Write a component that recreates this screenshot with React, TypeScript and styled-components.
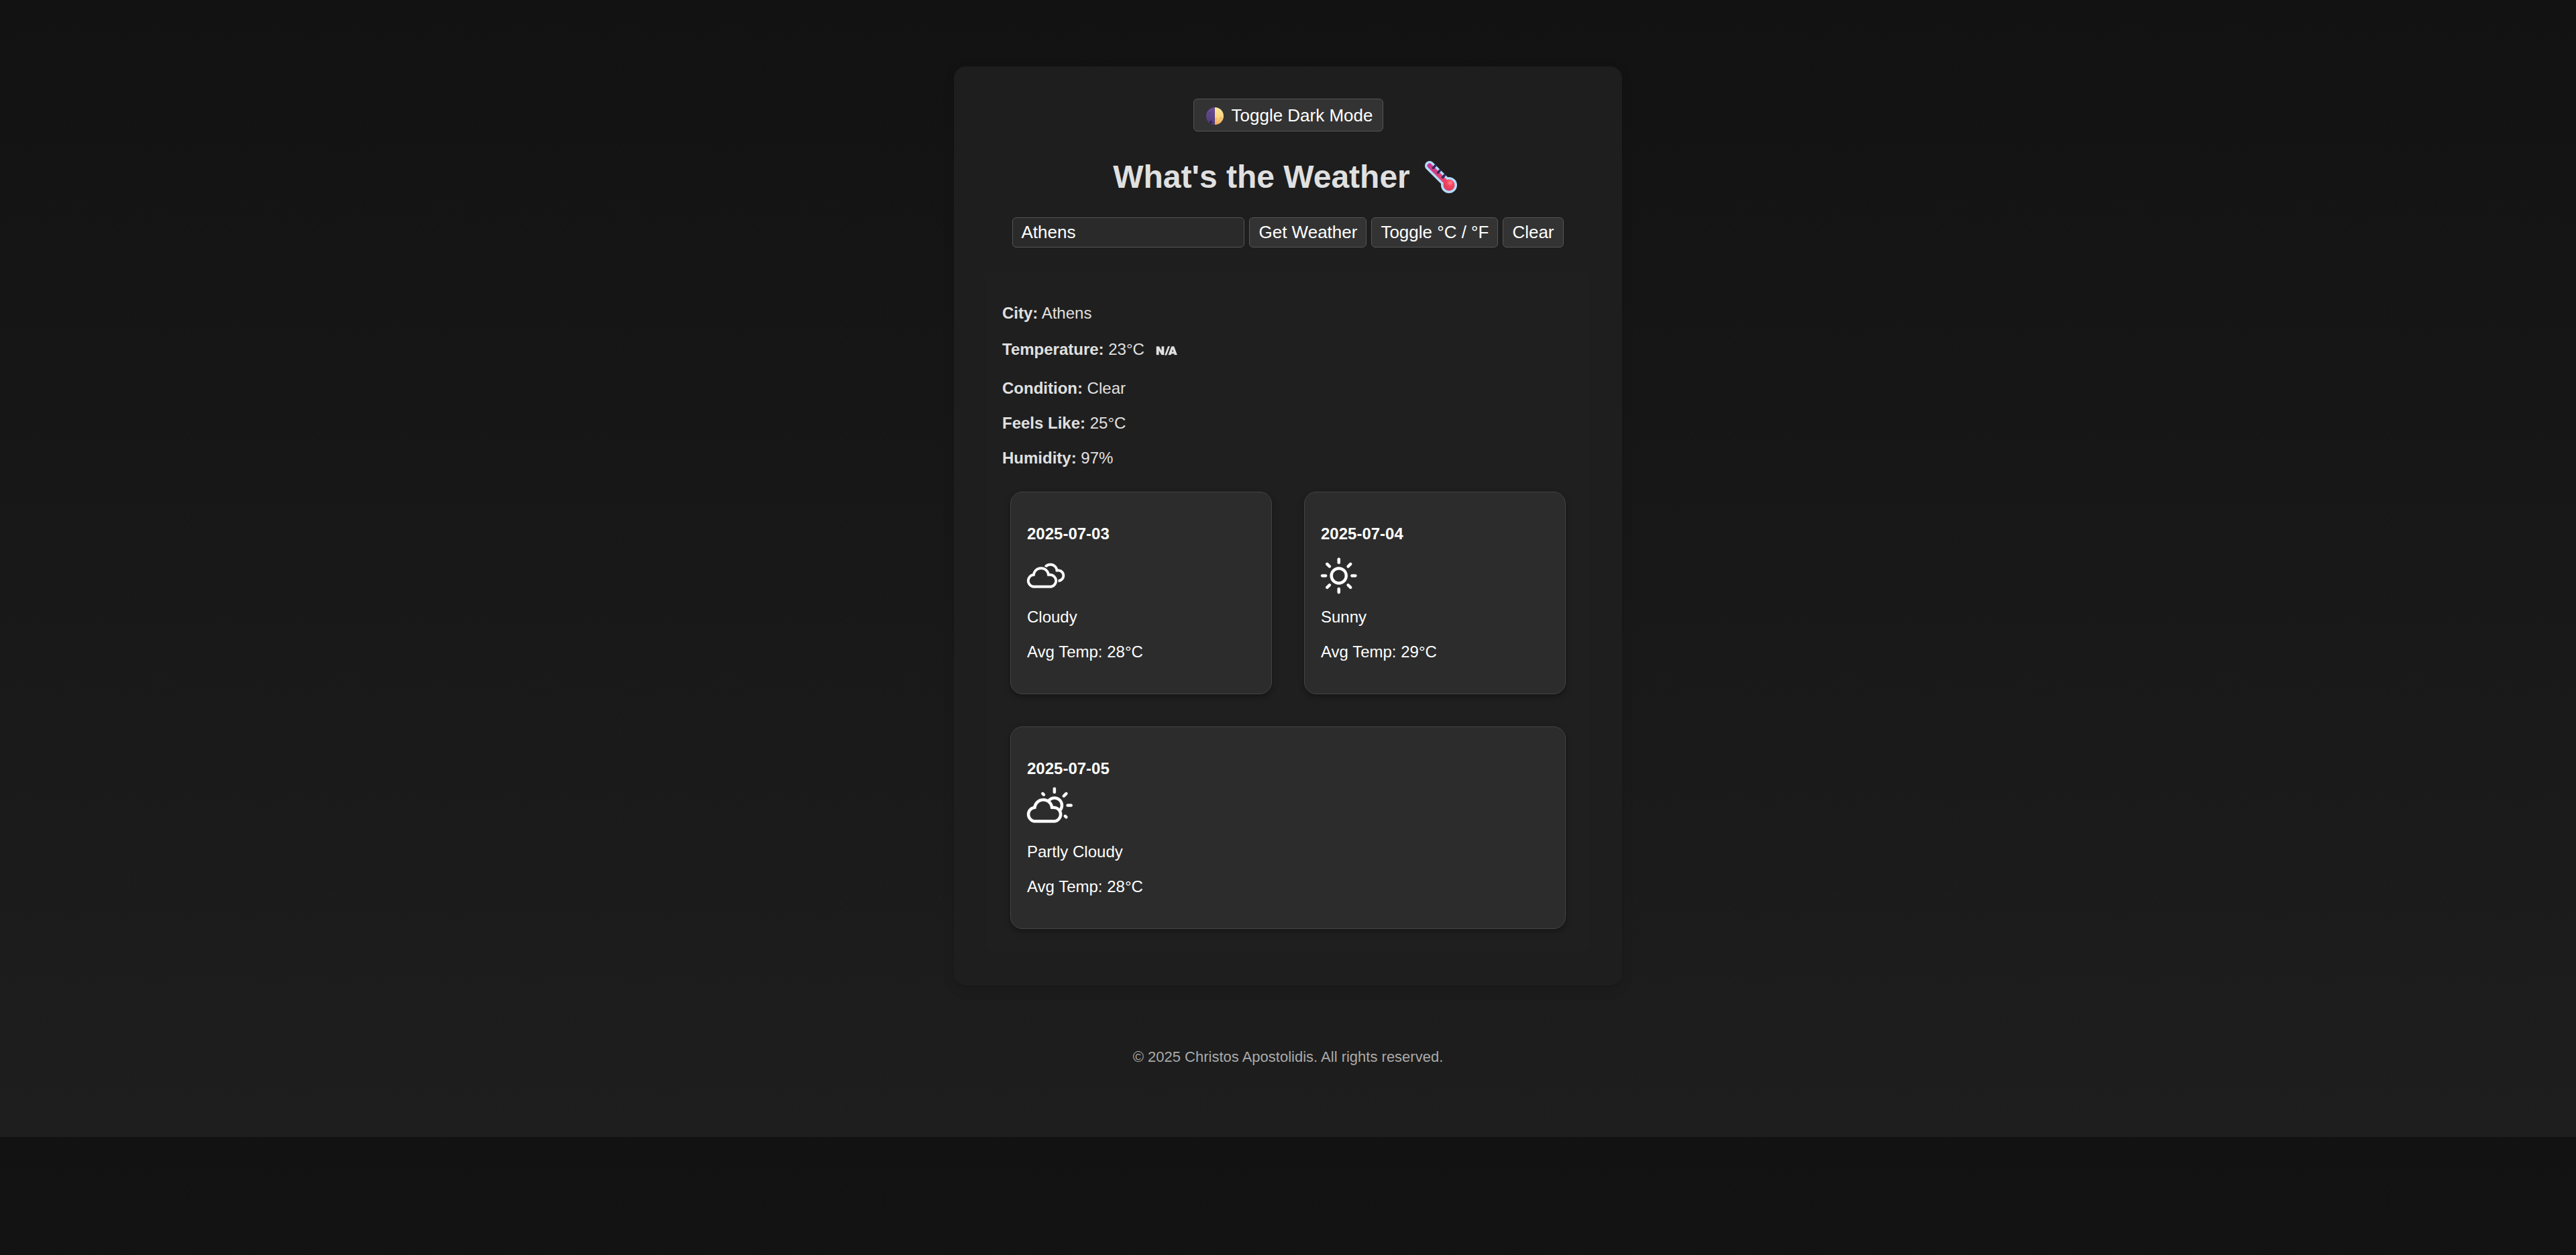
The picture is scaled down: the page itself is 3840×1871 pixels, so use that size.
import React, { useState } from "react";
import styled, { createGlobalStyle } from "styled-components";
import { WiCloudy, WiDayCloudy, WiDaySunny, WiNa } from "react-icons/wi";
import type { IconType } from "react-icons";

const GlobalStyle = createGlobalStyle`
  *, *::before, *::after { box-sizing: border-box; }
  html { font-size: 24px; }
  body {
    margin: 0;
    font-family: "Liberation Sans", Arial, sans-serif;
    font-size: 24px;
    line-height: 28px;
    color: #e0e0e0;
    background: linear-gradient(to bottom, #121212, #1e1e1e);
  }
`;

const Page = styled.div`
  display: flex;
  flex-direction: column;
  align-items: center;
  padding: 99px 24px 105px;
`;

const Container = styled.main`
  display: flex;
  flex-direction: column;
  align-items: center;
  width: 100%;
  max-width: 996px;
  padding: 48px;
  border-radius: 18px;
  background: #1e1e1e;
  box-shadow: 0 6px 18px rgba(0, 0, 0, 0.12);
`;

const Button = styled.button`
  display: inline-flex;
  align-items: center;
  gap: 7px;
  padding: 7px 13px;
  border: 1px solid #555;
  border-radius: 6px;
  background: #333;
  color: #fff;
  font: inherit;
  font-size: 26px;
  line-height: 29px;
  cursor: pointer;
`;

const ThemeButton = styled(Button)`
  padding: 10px 14px 8px 13px;
`;

const Title = styled.h1`
  display: flex;
  align-items: center;
  gap: 13px;
  margin: 40px 0 32px;
  font-size: 48px;
  line-height: 56px;
`;

const Emoji = styled.svg<{ $size: number }>`
  flex: none;
  width: ${(p) => p.$size}px;
  height: ${(p) => p.$size}px;
  margin: -6px 0;
`;

const SearchForm = styled.form`
  display: flex;
  flex-wrap: wrap;
  justify-content: center;
  gap: 7px;
  margin-bottom: 36px;
`;

const CityInput = styled.input`
  width: 346px;
  padding: 7px 12px;
  border: 1px solid #555;
  border-radius: 6px;
  background: #2a2a2a;
  color: #fff;
  font: inherit;
  font-size: 26px;
  line-height: 29px;
`;

const Panel = styled.section`
  width: 100%;
  padding: 48px 24px 24px;
  border-radius: 18px;
  background: #1f1f1f;
`;

const Details = styled.div`
  display: flex;
  flex-direction: column;
  gap: 24px;
  margin-bottom: 36px;
`;

const Detail = styled.p`
  margin: 0;
`;

const Forecast = styled.div`
  display: flex;
  flex-wrap: wrap;
  gap: 48px;
  padding: 0 12px 12px;
`;

const DayCard = styled.article`
  display: flex;
  flex: 1 1 320px;
  flex-direction: column;
  gap: 24px;
  padding: 48px 24px;
  border: 1px solid #444;
  border-radius: 18px;
  background: #2c2c2c;
  color: #fff;
  box-shadow: 0 4px 8px rgba(0, 0, 0, 0.3);

  p { margin: 0; }
`;

const Glyph = styled.svg`
  display: block;
  width: 48px;
  height: 48px;
  overflow: visible;

  svg { stroke-width: 0.1px; }
`;

const InlineGlyph = styled(Glyph)`
  display: inline-block;
  width: 36px;
  height: 36px;
  margin-left: 20px;
  vertical-align: -12px;
`;

const Footer = styled.footer`
  margin-top: 93px;
  color: #aaa;
  font-size: 22px;
`;

function HalfMoon() {
  return (
    <Emoji $size={36} viewBox="0 0 36 36" aria-hidden="true">
      <defs>
        <linearGradient id="moonLit" x1="0" y1="0" x2="0" y2="1">
          <stop offset="0" stopColor="#ffe9a0" />
          <stop offset="0.55" stopColor="#fbd57f" />
          <stop offset="1" stopColor="#f0a45c" />
        </linearGradient>
        <linearGradient id="moonDark" x1="0" y1="0" x2="0" y2="1">
          <stop offset="0" stopColor="#6b4f97" />
          <stop offset="1" stopColor="#4e3a78" />
        </linearGradient>
      </defs>
      <path d="M18 5a13 13 0 0 0 0 26z" fill="url(#moonDark)" />
      <path d="M18 5a13 13 0 0 1 0 26z" fill="url(#moonLit)" />
      <circle cx="12" cy="27" r="2" fill="#2f2350" />
      <circle cx="10" cy="14" r="2" fill="#5a4186" />
      <circle cx="19.5" cy="22" r="1.5" fill="#e9b565" />
      <circle cx="27" cy="21" r="1.5" fill="#efb068" />
    </Emoji>
  );
}

function Thermometer() {
  return (
    <Emoji $size={66} viewBox="0 0 66 66" aria-hidden="true">
      <defs>
        <linearGradient id="tube" gradientUnits="userSpaceOnUse" x1="13" y1="13" x2="42" y2="42">
          <stop offset="0" stopColor="#c2388f" />
          <stop offset="1" stopColor="#ef4568" />
        </linearGradient>
        <radialGradient id="bulb" cx="0.6" cy="0.3" r="0.7">
          <stop offset="0" stopColor="#ff8a94" />
          <stop offset="0.4" stopColor="#f8455f" />
          <stop offset="1" stopColor="#d93a5c" />
        </radialGradient>
      </defs>
      <path d="M16 16L42 42" stroke="#b4dcff" strokeWidth="14" strokeLinecap="round" />
      <circle cx="45" cy="45" r="12" fill="#b4dcff" />
      <path d="M16 16L42 42" stroke="url(#tube)" strokeWidth="7" strokeLinecap="round" />
      <circle cx="45" cy="45" r="8.5" fill="url(#bulb)" />
      <path
        d="M24.5 16l-3 3.5M31.5 23l-3 3.5M38.5 30l-3 3.5"
        stroke="#352a5c"
        strokeWidth="3.5"
        strokeLinecap="round"
      />
    </Emoji>
  );
}

type IconCrop = { icon: IconType; left: number };

function WeatherGlyph({ icon: Icon, left }: IconCrop) {
  return (
    <Glyph viewBox={`${left} 5 19 19`} aria-hidden="true">
      <Icon size={30} />
    </Glyph>
  );
}

const days = [
  { date: "2025-07-03", text: "Cloudy", temp: 28, glyph: { icon: WiCloudy, left: 3.9 } },
  { date: "2025-07-04", text: "Sunny", temp: 29, glyph: { icon: WiDaySunny, left: 4.4 } },
  { date: "2025-07-05", text: "Partly Cloudy", temp: 28, glyph: { icon: WiDayCloudy, left: 1.6 } },
];

export default function App() {
  const [city, setCity] = useState("Athens");

  return (
    <>
      <GlobalStyle />
      <Page>
        <Container>
          <ThemeButton type="button">
            <HalfMoon />
            Toggle Dark Mode
          </ThemeButton>
          <Title>
            What's the Weather
            <Thermometer />
          </Title>
          <SearchForm onSubmit={(e) => e.preventDefault()}>
            <CityInput aria-label="City" value={city} onChange={(e) => setCity(e.target.value)} />
            <Button type="submit">Get Weather</Button>
            <Button type="button">Toggle °C / °F</Button>
            <Button type="button" onClick={() => setCity("")}>Clear</Button>
          </SearchForm>
          <Panel>
            <Details>
              <Detail><strong>City:</strong> Athens</Detail>
              <Detail>
                <strong>Temperature:</strong> 23°C
                <InlineGlyph viewBox="8 5.5 19 19" aria-hidden="true">
                  <WiNa size={30} />
                </InlineGlyph>
              </Detail>
              <Detail><strong>Condition:</strong> Clear</Detail>
              <Detail><strong>Feels Like:</strong> 25°C</Detail>
              <Detail><strong>Humidity:</strong> 97%</Detail>
            </Details>
            <Forecast>
              {days.map((day) => (
                <DayCard key={day.date}>
                  <p><strong>{day.date}</strong></p>
                  <WeatherGlyph {...day.glyph} />
                  <p>{day.text}</p>
                  <p>Avg Temp: {day.temp}°C</p>
                </DayCard>
              ))}
            </Forecast>
          </Panel>
        </Container>
        <Footer>© 2025 Christos Apostolidis. All rights reserved.</Footer>
      </Page>
    </>
  );
}
